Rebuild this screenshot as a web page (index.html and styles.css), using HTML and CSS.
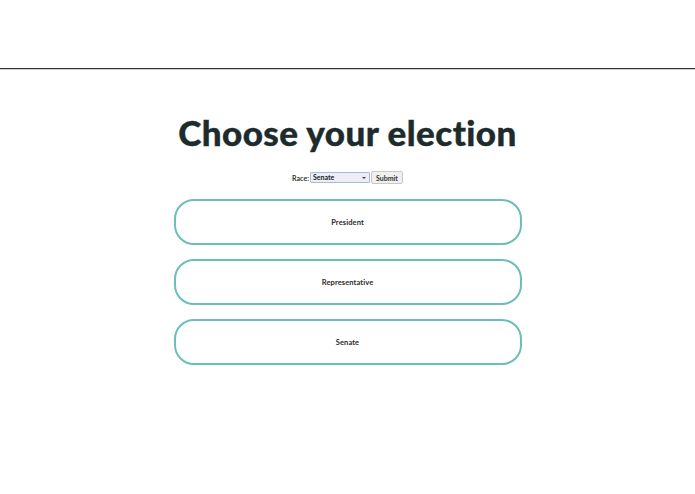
FILE: index.html
```html
<!DOCTYPE html>
<html lang="en">
<head>
  <meta charset="UTF-8">
  <meta name="viewport" content="width=device-width, initial-scale=1.0">
  <title>Choose your election</title>
  <link rel="stylesheet" href="styles.css">
</head>
<body>
  <div class="topbar"></div>
  <div class="main">
    <h1 class="title">Choose your election</h1>
    <form class="raceForm">
      <label for="race">Race:</label>
      <span class="selectWrap">
        <select id="race" class="raceSelect">
          <option>President</option>
          <option>Representative</option>
          <option selected>Senate</option>
        </select>
      </span>
      <input type="button" value="Submit" class="submitBtn">
    </form>
    <div class="choices">
      <a href="javascript:;" class="choice">President</a>
      <a href="javascript:;" class="choice">Representative</a>
      <a href="javascript:;" class="choice">Senate</a>
    </div>
  </div>
</body>
</html>
```

FILE: styles.css
```css
body{ margin: 0; font-family: "Lato", "Liberation Sans", sans-serif; color: #1f2a2c; background: #fff;}
.topbar{ height: 68px; border-bottom: 1px solid #333; box-shadow: 0 1px 0 #cfcfcf;}
.main{ display: flex; flex-direction: column; align-items: center;}
.title{ margin: 42px 0 0; font-size: 35px; line-height: 42px; font-weight: 900; color: #1e2b2d; letter-spacing: 0.45px; -webkit-text-stroke: 0.4px #1e2b2d;}
.raceForm{ margin-top: 18px; display: flex; align-items: center; font-size: 7px; font-weight: 700; font-family: "Lato", "DejaVu Sans", sans-serif;}
.raceForm label{ color: #333;}
.selectWrap{ position: relative; display: block; margin: 0 1px;}
.selectWrap::after{ content: ""; position: absolute; right: 4px; top: 5px; border-left: 2px solid transparent; border-right: 2px solid transparent; border-top: 2px solid #444; pointer-events: none;}
.raceSelect{ appearance: none; -webkit-appearance: none; display: block; width: 60px; height: 11px; font-size: 7px; font-weight: 700; padding: 0 2px; border: 1px solid #a9b9d6; border-radius: 1px; background: #eceef3; color: #222; font-family: "Lato", "DejaVu Sans", sans-serif; line-height: 9px;}
.submitBtn{ height: 13px; padding: 0 4px; font-size: 7px; font-weight: 700; font-family: "Lato", "DejaVu Sans", sans-serif; border: 1px solid #c8c8c8; background: #f0f0f0; color: #333; border-radius: 2px;}
.choices{ margin-top: 15px; display: flex; flex-direction: column; gap: 14px;}
.choice{ width: 344px; height: 42px; display: flex; align-items: center; justify-content: center; border: 2px solid #6cbfb7; border-radius: 20px; text-decoration: none; color: #2a2a2a; font-size: 7.5px; font-weight: 700; font-family: "Lato", "DejaVu Sans", sans-serif; letter-spacing: 0.1px;}
```
